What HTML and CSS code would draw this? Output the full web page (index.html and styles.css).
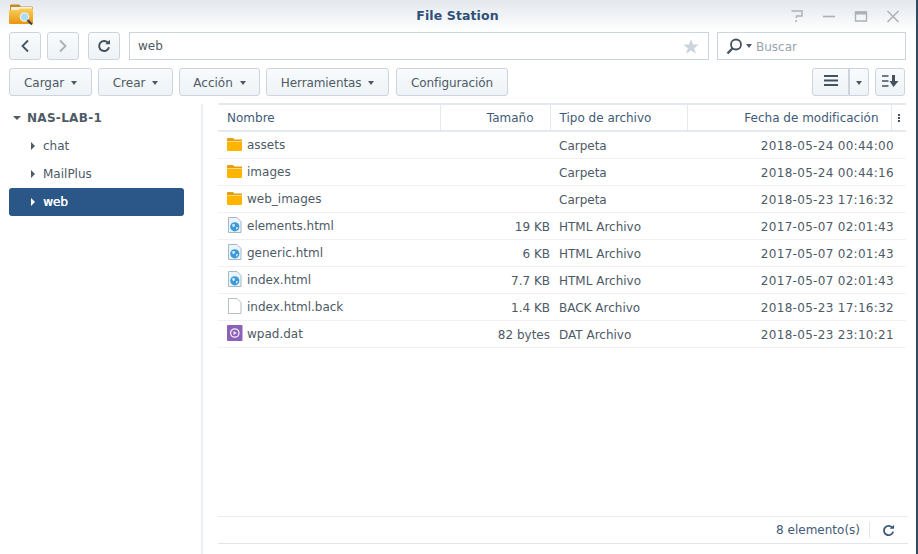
FILE: index.html
```html
<!DOCTYPE html>
<html lang="es">
<head>
    <meta charset="UTF-8">
    <title>File Station</title>
    <link rel="stylesheet" href="styles.css">
</head>
<body>

    <div class="window">
        <div class="titlebar">
            <div class="title-side">
                <svg class="app-icon" width="26" height="22" viewBox="0 0 26 22">
                    <defs>
                        <linearGradient id="appFolder" x1="0" y1="0" x2="0" y2="1">
                            <stop offset="0" stop-color="#fbcf5c"/>
                            <stop offset="1" stop-color="#e8950f"/>
                        </linearGradient>
                    </defs>
                    <path d="M1 3 L1 1.500 Q1 .500 2 .500 L10 .500 L12 2.500 L23 2.500 L24 4 L24 8 L1 8 Z" fill="#c98a1c"/>
                    <rect x="2" y="3" width="21" height="4" fill="#f6f1e2"/>
                    <path d="M0 6 L9 6 L11 4.500 L24 4.500 L24 19 Q24 20 23 20 L1 20 Q0 20 0 19 Z" fill="url(#appFolder)"/>
                    <circle cx="15.500" cy="13" r="4.200" fill="#a9def2" stroke="#e9eef2" stroke-width="1.200"/>
                    <path d="M18.500 16 L23 20.500" stroke="#34404c" stroke-width="2"/>
                </svg>
            </div>
            <div class="title">File Station</div>
            <div class="title-side window-btns">
                <svg width="14" height="14" viewBox="0 0 14 14"><path d="M1.500 2 H12 V7 H6.500 V9 M6 11 V13" fill="none" stroke="#a9b1b9" stroke-width="1.500"/></svg>
                <svg width="14" height="14" viewBox="0 0 14 14"><path d="M1 7.500 H13" stroke="#a9b1b9" stroke-width="1.600"/></svg>
                <svg width="14" height="14" viewBox="0 0 14 14"><path d="M1.500 3 H12.500 V12 H1.500 Z" fill="none" stroke="#a9b1b9" stroke-width="1.400"/><rect x="1" y="2.500" width="12" height="3" fill="#a9b1b9"/></svg>
                <svg width="14" height="14" viewBox="0 0 14 14"><path d="M1.500 2 L12.500 13 M12.500 2 L1.500 13" stroke="#a9b1b9" stroke-width="1.500"/></svg>
            </div>
        </div>

        <div class="toolbar nav-row">
            <button class="btn icon-btn">
                <svg width="10" height="14" viewBox="0 0 10 14"><path d="M8 1.500 L2.500 7 L8 12.500" fill="none" stroke="#44525f" stroke-width="1.800"/></svg>
            </button>
            <button class="btn icon-btn btn-off">
                <svg width="10" height="14" viewBox="0 0 10 14"><path d="M2 1.500 L7.500 7 L2 12.500" fill="none" stroke="#a7b0b9" stroke-width="1.800"/></svg>
            </button>
            <button class="btn icon-btn refresh-btn">
                <svg width="14" height="14" viewBox="0 0 14 14"><path d="M11.300 4.200 A5 5 0 1 0 12 8.200" fill="none" stroke="#44525f" stroke-width="2"/><path d="M8.300 5.200 H13 V.800 Z" fill="#44525f"/></svg>
            </button>
            <div class="path-box">
                <span class="path-text">web</span>
                <svg class="star" width="16" height="15" viewBox="0 0 16 15"><path d="M8 0 L10 5.400 L15.800 5.600 L11.200 9.200 L12.900 14.800 L8 11.500 L3.100 14.800 L4.800 9.200 L.200 5.600 L6 5.400 Z" fill="#ccd4dd"/></svg>
            </div>
            <div class="search-box">
                <svg width="17" height="17" viewBox="0 0 17 17"><circle cx="10" cy="6.500" r="5" fill="none" stroke="#44525f" stroke-width="1.800"/><path d="M6.300 10.500 L1.500 15.500" stroke="#44525f" stroke-width="2.400"/></svg>
                <span class="caret"></span>
                <span class="search-text">Buscar</span>
            </div>
        </div>

        <div class="toolbar action-row">
            <button class="btn btn-cargar">Cargar <span class="caret"></span></button>
            <button class="btn btn-crear">Crear <span class="caret"></span></button>
            <button class="btn btn-accion">Acción <span class="caret"></span></button>
            <button class="btn btn-tools">Herramientas <span class="caret"></span></button>
            <button class="btn btn-config">Configuración</button>
            <div class="view-btns">
                <div class="btn-group">
                    <button class="btn list-btn">
                        <svg width="14" height="11" viewBox="0 0 14 11"><path d="M0 1 H14 M0 5.500 H14 M0 10 H14" stroke="#44525f" stroke-width="1.800"/></svg>
                    </button>
                    <button class="btn drop-btn"><span class="caret"></span></button>
                </div>
                <button class="btn sort-btn">
                    <svg width="17" height="12" viewBox="0 0 17 12"><path d="M0 1 H6.500 M0 6 H6.500 M0 11 H6.500" stroke="#44525f" stroke-width="1.500"/><path d="M10 0 H13 V6 H16.500 L11.500 12 L7.500 6 H10 Z" fill="#44525f"/></svg>
                </button>
            </div>
        </div>

        <div class="main">
            <div class="sidebar">
                <div class="tree-root"><span class="caret"></span>NAS-LAB-1</div>
                <div class="tree-item"><span class="arrow"></span>chat</div>
                <div class="tree-item"><span class="arrow"></span>MailPlus</div>
                <div class="tree-item selected"><span class="arrow"></span>web</div>
            </div>

            <div class="content">
                <table class="files">
                    <thead>
                        <tr>
                            <th class="col-name">Nombre</th>
                            <th class="col-size">Tamaño</th>
                            <th class="col-type">Tipo de archivo</th>
                            <th class="col-date">Fecha de modificación</th>
                            <th class="col-more"><span class="dots"></span></th>
                        </tr>
                    </thead>
                    <tbody>
                        <tr>
                            <td class="col-name"><svg class="ficon" width="17" height="16" viewBox="0 0 17 16"><use href="#folder"/></svg>assets</td>
                            <td class="col-size"></td><td class="col-type">Carpeta</td><td class="col-date" colspan="2">2018-05-24 00:44:00</td>
                        </tr>
                        <tr>
                            <td class="col-name"><svg class="ficon" width="17" height="16" viewBox="0 0 17 16"><use href="#folder"/></svg>images</td>
                            <td class="col-size"></td><td class="col-type">Carpeta</td><td class="col-date" colspan="2">2018-05-24 00:44:16</td>
                        </tr>
                        <tr>
                            <td class="col-name"><svg class="ficon" width="17" height="16" viewBox="0 0 17 16"><use href="#folder"/></svg>web_images</td>
                            <td class="col-size"></td><td class="col-type">Carpeta</td><td class="col-date" colspan="2">2018-05-23 17:16:32</td>
                        </tr>
                        <tr>
                            <td class="col-name"><svg class="ficon" width="17" height="16" viewBox="0 0 17 16"><use href="#htmlfile"/></svg>elements.html</td>
                            <td class="col-size">19 KB</td><td class="col-type">HTML Archivo</td><td class="col-date" colspan="2">2017-05-07 02:01:43</td>
                        </tr>
                        <tr>
                            <td class="col-name"><svg class="ficon" width="17" height="16" viewBox="0 0 17 16"><use href="#htmlfile"/></svg>generic.html</td>
                            <td class="col-size">6 KB</td><td class="col-type">HTML Archivo</td><td class="col-date" colspan="2">2017-05-07 02:01:43</td>
                        </tr>
                        <tr>
                            <td class="col-name"><svg class="ficon" width="17" height="16" viewBox="0 0 17 16"><use href="#htmlfile"/></svg>index.html</td>
                            <td class="col-size">7.7 KB</td><td class="col-type">HTML Archivo</td><td class="col-date" colspan="2">2017-05-07 02:01:43</td>
                        </tr>
                        <tr>
                            <td class="col-name"><svg class="ficon" width="17" height="16" viewBox="0 0 17 16"><use href="#blankfile"/></svg>index.html.back</td>
                            <td class="col-size">1.4 KB</td><td class="col-type">BACK Archivo</td><td class="col-date" colspan="2">2018-05-23 17:16:32</td>
                        </tr>
                        <tr>
                            <td class="col-name"><svg class="ficon" width="17" height="16" viewBox="0 0 17 16"><use href="#datfile"/></svg>wpad.dat</td>
                            <td class="col-size">82 bytes</td><td class="col-type">DAT Archivo</td><td class="col-date" colspan="2">2018-05-23 23:10:21</td>
                        </tr>
                    </tbody>
                </table>

                <div class="statusbar">
                    <span class="count">8 elemento(s)</span>
                    <span class="status-refresh">
                        <svg width="13" height="13" viewBox="0 0 14 14"><path d="M11.300 4.200 A5 5 0 1 0 12 8.200" fill="none" stroke="#3f5a78" stroke-width="2"/><path d="M8.300 5.200 H13 V.800 Z" fill="#3f5a78"/></svg>
                    </span>
                </div>
            </div>
        </div>
    </div>

    <!-- shared file icons -->
    <svg class="defs" width="0" height="0">
        <symbol id="folder" viewBox="0 0 17 16">
            <path d="M1 3 Q1 2 2 2 L7 2 L8.500 3.500 L16 3.500 L16 5 L1 5 Z" fill="#e79f0c"/>
            <path d="M1 5.500 L16 5.500 L16 14 Q16 15 15 15 L2 15 Q1 15 1 14 Z" fill="#ffb400"/>
        </symbol>
        <symbol id="htmlfile" viewBox="0 0 17 16">
            <path d="M2.500 .500 L11 .500 L15 4.500 L15 15.500 L2.500 15.500 Z" fill="#eaf4fa" stroke="#a5b8c6"/>
            <circle cx="8.800" cy="9.800" r="4.600" fill="#3a9ad9"/>
            <path d="M6 7.500 L8.800 7 L8.800 9.300 L7 10.300 Z M10 10.300 L12.300 10.300 L10.300 13 Z" fill="#e3f2fb"/>
        </symbol>
        <symbol id="blankfile" viewBox="0 0 17 16">
            <path d="M2.500 .500 L11 .500 L15 4.500 L15 15.500 L2.500 15.500 Z" fill="#fff" stroke="#b5bfc8"/>
        </symbol>
        <symbol id="datfile" viewBox="0 0 17 16">
            <rect x="1" y="0" width="15.500" height="16" rx="1" fill="#8a63b8"/>
            <circle cx="8.800" cy="8" r="4.200" fill="none" stroke="#f3eef9" stroke-width="1.300"/>
            <path d="M7.500 6 L10.800 8 L7.500 10 Z" fill="#f3eef9"/>
        </symbol>
    </svg>

</body>
</html>
```

FILE: styles.css
```css
* {
    box-sizing: border-box;
}

html, body {
    height: 100%;
}

body {
    margin: 0;
    background: #fff;
    font-family: 'DejaVu Sans', sans-serif;
    font-size: 12px;
    color: #4d5a66;
    overflow: hidden;
}

.window {
    height: 554px;
    display: flex;
    flex-direction: column;
    border-right: 2px solid #2f4a63;
}

.defs {
    position: absolute;
}

/* title bar */
.titlebar {
    height: 32px;
    flex: none;
    display: flex;
    align-items: center;
    padding: 0 16px 2px 9px;
    background: linear-gradient(#e3e8ee, #fff);
}

.title-side {
    flex: 1;
    display: flex;
}

.title {
    font-weight: bold;
    font-size: 12.500px;
    letter-spacing: 0.1px;
    color: #2f5079;
    padding: 1px 0 0 6px;
}

.window-btns {
    justify-content: flex-end;
    gap: 18px;
    padding-top: 1px;
}

/* toolbars */
.toolbar {
    display: flex;
    flex: none;
    padding: 0 10px 0 9px;
}

.nav-row {
    height: 28px;
}

.action-row {
    height: 28px;
    margin-top: 8px;
    gap: 6px;
}

.btn {
    height: 28px;
    padding: 1px 0 0;
    background: linear-gradient(#f9fbfc, #eef3f7);
    border: 1px solid #ccd5dd;
    border-radius: 3px;
    font-family: inherit;
    font-size: 12px;
    color: #4d5a66;
}

.btn-cargar {
    width: 83px;
}

.btn-crear {
    width: 75px;
}

.btn-accion {
    width: 81px;
}

.btn-tools {
    width: 123px;
    letter-spacing: -0.1px;
}

.btn-config {
    width: 112px;
    margin-left: 1px;
    letter-spacing: -0.1px;
}

.icon-btn {
    width: 32px;
    padding: 0;
    margin-right: 6px;
    display: flex;
    align-items: center;
    justify-content: center;
}

.refresh-btn {
    margin-left: 3px;
    margin-right: 9px;
}

.caret {
    display: inline-block;
    width: 0;
    height: 0;
    margin-left: 3px;
    vertical-align: middle;
    border-left: 3.500px solid transparent;
    border-right: 3.500px solid transparent;
    border-top: 4px solid #4d5a66;
}

.path-box {
    width: 580px;
    height: 28px;
    display: flex;
    align-items: center;
    justify-content: space-between;
    padding: 0 9px 0 8px;
    background: #fff;
    border: 1px solid #ccd5dd;
}

.search-box {
    width: 189px;
    height: 28px;
    margin-left: 8px;
    display: flex;
    align-items: center;
    padding: 0 8px;
    border: 1px solid #ccd5dd;
    background: #fff;
}

.search-text {
    margin-left: 4px;
    padding-top: 1px;
    color: #98a4af;
}

.view-btns {
    margin-left: auto;
    display: flex;
    gap: 6px;
}

.btn-group {
    display: flex;
}

.list-btn {
    width: 37px;
    padding: 0;
    border-radius: 3px 0 0 3px;
}

.drop-btn {
    width: 20px;
    padding: 0;
    border-left: 0;
    border-radius: 0 3px 3px 0;
    box-shadow: inset 1px 0 0 #ccd5dd;
}

.drop-btn .caret {
    margin-left: 0;
}

.sort-btn {
    width: 30px;
    padding: 0;
    margin-right: 1px;
}

/* main area */
.main {
    flex: 1;
    display: flex;
    min-height: 0;
    margin-top: 8px;
}

.sidebar {
    width: 203px;
    flex: none;
    padding: 0 17px 0 9px;
    border-right: 2px solid #edf0f3;
}

.tree-root {
    height: 28px;
    display: flex;
    align-items: center;
    padding-left: 4px;
    font-weight: bold;
    letter-spacing: 0.3px;
    color: #4d5a66;
}

.tree-root .caret {
    margin: 0 6px 0 0;
    border-left-width: 4px;
    border-right-width: 4px;
}

.tree-item {
    height: 28px;
    display: flex;
    align-items: center;
    padding-left: 22px;
    border-radius: 3px;
}

.arrow {
    width: 0;
    height: 0;
    margin-right: 8px;
    border-top: 4px solid transparent;
    border-bottom: 4px solid transparent;
    border-left: 4px solid #4d5a66;
}

.selected {
    background: #2b5688;
    color: #fff;
    text-shadow: 0.4px 0 0 #fff;
}

.selected .arrow {
    border-left-color: #fff;
}

.content {
    flex: 1;
    display: flex;
    flex-direction: column;
    min-width: 0;
    padding: 0 10px 10px 15px;
}

/* file list */
.files {
    width: 100%;
    table-layout: fixed;
    border-collapse: collapse;
    margin: -1px 0 auto;
}

.files th {
    height: 27px;
    padding: 0 16px 0 9px;
    font-weight: normal;
    color: #3f5a78;
    text-align: left;
    border-top: 2px solid #e3e9ef;
    border-bottom: 2px solid #e3e9ef;
    border-right: 1px solid #e3e9ef;
}

.files th:last-child {
    border-right: 0;
    padding: 0;
}

.files td {
    height: 27px;
    padding: 2px 0 0;
    white-space: nowrap;
    border-bottom: 1px solid #eef1f4;
}

.col-name {
    width: 222px;
}

.files td.col-name {
    padding: 0 0 1px 8px;
}

.col-size {
    width: 110px;
    text-align: right;
}

.files th.col-size {
    text-align: right;
}

.col-type {
    width: 137px;
}

.files td.col-type {
    padding-left: 9px;
}

.col-date {
    width: 204px;
    text-align: right;
}

.files th.col-date {
    text-align: right;
    padding-right: 12px;
}

.files td.col-date {
    padding-right: 12px;
    letter-spacing: 0.3px;
}

.col-more {
    width: 15px;
}

.dots {
    display: block;
    width: 2px;
    height: 8px;
    margin: 0 auto;
    background: repeating-linear-gradient(#44525f 0 2px, transparent 2px 3px);
}

.ficon {
    vertical-align: -3px;
    margin-right: 4px;
}

.statusbar {
    height: 28px;
    flex: none;
    display: flex;
    align-items: center;
    justify-content: flex-end;
    margin-right: -2px;
    padding-right: 2px;
    border-top: 1px solid #e8ecf0;
    border-bottom: 1px solid #dfe5ea;
    color: #3f5a78;
}

.status-refresh {
    margin-left: 9px;
    padding: 2px 11px 0 12px;
    height: 16px;
    border-left: 1px solid #dfe5ea;
}
```
